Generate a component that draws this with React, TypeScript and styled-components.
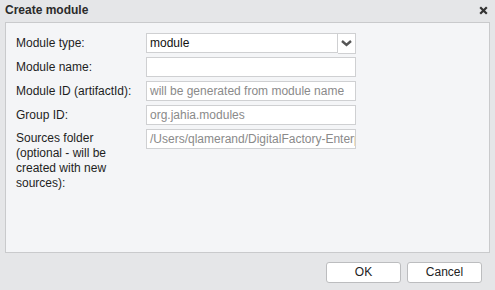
import styled, { createGlobalStyle } from "styled-components";

const Global = createGlobalStyle`
  html, body { margin: 0; padding: 0; background: #e5e6e8; }
  * { box-sizing: border-box; }
`;

const Dialog = styled.div`
  width: 495px;
  height: 290px;
  background: #e5e6e8;
  display: flex;
  flex-direction: column;
  font-family: "Liberation Sans", Arial, sans-serif;
  color: #1e1e1e;
`;

const Header = styled.div`
  height: 22px;
  display: flex;
  align-items: center;
  justify-content: space-between;
  padding: 0 7px 2px 5px;
`;

const Title = styled.div`
  font-size: 12px;
  font-weight: bold;
  color: #2b2b2b;
`;

const Panel = styled.div`
  margin: 0 5px;
  height: 231px;
  border: 1px solid #c9cacc;
  background: #f4f5f7;
  padding: 10px 0 0 10px;
`;

const Form = styled.div`
  display: grid;
  grid-template-columns: 130px 210px;
  row-gap: 4px;
`;

const Label = styled.div<{ $multi?: boolean }>`
  font-size: 12px;
  line-height: 15px;
  width: 122px;
  padding-top: ${(p) => (p.$multi ? "2px" : "3px")};
`;

const Input = styled.div<{ $placeholder?: boolean }>`
  height: 20px;
  border: 1px solid #cfd0d2;
  background: #fff;
  font-size: 12px;
  line-height: 18px;
  padding: 0 3px;
  white-space: nowrap;
  overflow: hidden;
  color: ${(p) => (p.$placeholder ? "#8a8a8a" : "#111")};
`;

const SelectRow = styled.div`
  display: flex;
  height: 20px;
`;

const SelectField = styled(Input)`
  flex: 1;
`;

const Arrow = styled.div`
  width: 18px;
  height: 21px;
  border: 1px solid #cfd0d2;
  border-left: none;
  background: #fff;
  display: flex;
  align-items: center;
  justify-content: center;
`;

const Footer = styled.div`
  display: flex;
  justify-content: flex-end;
  gap: 6px;
  padding: 9px 13px 0 0;
`;

const Button = styled.div`
  width: 75px;
  height: 21px;
  border: 1px solid #bcbdbf;
  border-radius: 3px;
  background: #fff;
  font-size: 12px;
  line-height: 19px;
  text-align: center;
  color: #222;
`;

function CloseIcon() {
  return (
    <svg width="9" height="9" viewBox="0 0 9 9">
      <path d="M1.2 1.2 L7.8 7.8 M7.8 1.2 L1.2 7.8" stroke="#333" strokeWidth="2.2" />
    </svg>
  );
}

function Chevron() {
  return (
    <svg width="11" height="7" viewBox="0 0 11 7">
      <path d="M1 1 L5.5 5 L10 1" fill="none" stroke="#555" strokeWidth="2.4" />
    </svg>
  );
}

export default function App() {
  return (
    <Dialog>
      <Global />
      <Header>
        <Title>Create module</Title>
        <CloseIcon />
      </Header>
      <Panel>
        <Form>
          <Label>Module type:</Label>
          <SelectRow>
            <SelectField>module</SelectField>
            <Arrow>
              <Chevron />
            </Arrow>
          </SelectRow>
          <Label>Module name:</Label>
          <Input />
          <Label>Module ID (artifactId):</Label>
          <Input $placeholder>will be generated from module name</Input>
          <Label>Group ID:</Label>
          <Input $placeholder>org.jahia.modules</Input>
          <Label $multi>Sources folder (optional - will be created with new sources):</Label>
          <Input $placeholder>/Users/qlamerand/DigitalFactory-Enterprise</Input>
        </Form>
      </Panel>
      <Footer>
        <Button>OK</Button>
        <Button>Cancel</Button>
      </Footer>
    </Dialog>
  );
}
